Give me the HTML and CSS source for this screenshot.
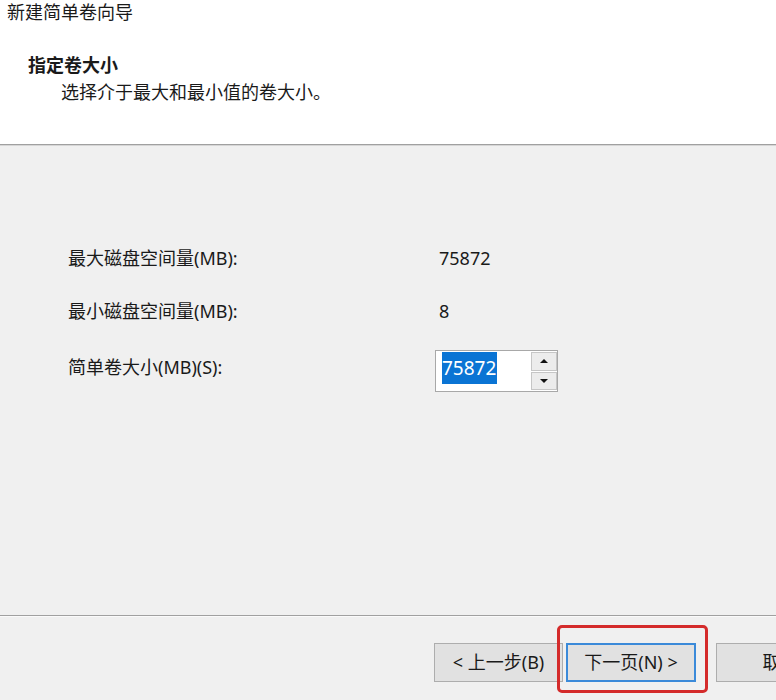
FILE: index.html
```html
<!DOCTYPE html>
<html lang="zh-CN">
<head>
<meta charset="utf-8">
<title>新建简单卷向导</title>
<link rel="stylesheet" href="styles.css">
</head>
<body>
<div class="window">
  <div class="header">
    <div class="title">新建简单卷向导</div>
    <div class="heading">指定卷大小</div>
    <div class="subtitle">选择介于最大和最小值的卷大小。</div>
  </div>
  <div class="content">
    <div class="grid">
      <div class="label">最大磁盘空间量(MB):</div>
      <div class="value">75872</div>
      <div class="label">最小磁盘空间量(MB):</div>
      <div class="value">8</div>
      <div class="label label-spin">简单卷大小(MB)(S):</div>
      <div class="spin">
        <div class="spin-field"><span class="selected">75872</span></div>
        <div class="spin-buttons">
          <div class="spin-btn"><span class="arrow-up"></span></div>
          <div class="spin-btn"><span class="arrow-down"></span></div>
        </div>
      </div>
    </div>
  </div>
  <div class="footer">
    <div class="btn">&lt; 上一步(B)</div>
    <div class="btn btn-default">下一页(N) &gt;</div>
    <div class="btn btn-cancel">取消</div>
  </div>
  <div class="highlight-box"></div>
</div>
</body>
</html>
```
FILE: styles.css
```css
html, body {
  margin: 0;
  padding: 0;
}
body {
  width: 776px;
  height: 700px;
  overflow: hidden;
  font-family: "Noto Sans", "Noto Sans CJK SC", sans-serif;
  color: #1a1a1a;
  background: #f0f0f0;
}
.window {
  position: relative;
  width: 776px;
  height: 700px;
  overflow: hidden;
}
.header {
  background: #ffffff;
  border-bottom: 1px solid #a0a0a0;
  box-sizing: border-box;
  height: 145px;
}
.title {
  font-size: 18px;
  line-height: 24px;
  padding-left: 7px;
}
.heading {
  font-size: 18px;
  font-weight: bold;
  line-height: 26px;
  padding-left: 28px;
  margin-top: 28px;
}
.subtitle {
  font-size: 18px;
  line-height: 26px;
  padding-left: 61px;
  margin-top: 1px;
}
.content {
  border-top: 1px solid #d6d6d6;
  border-bottom: 1px solid #a0a0a0;
  height: 469px;
  background: #f0f0f0;
}
.grid {
  display: grid;
  grid-template-columns: 367px 123px;
  grid-template-rows: 26px 26px 42px;
  row-gap: 27px;
  padding-top: 99px;
  padding-left: 68px;
  font-size: 18px;
  line-height: 26px;
}
.value {
  padding-left: 4px;
}
.label-spin {
  margin-top: 3px;
}
.spin {
  display: flex;
  width: 123px;
  height: 42px;
  box-sizing: border-box;
  border: 1px solid #a8a8a8;
  background: #ffffff;
  margin-top: -1px;
}
.spin-field {
  flex: 1;
  padding-left: 6px;
  padding-top: 1px;
}
.selected {
  display: inline-block;
  background: #0a74d4;
  color: #ffffff;
  line-height: 32px;
  font-size: 19px;
  padding-right: 1px;
}
.spin-buttons {
  width: 26px;
  display: flex;
  flex-direction: column;
  gap: 1px;
  padding: 1px 0 1px 0;
  background: #ffffff;
}
.spin-btn {
  flex: 1;
  background: #ececec;
  border: 1px solid #c6c6c6;
  display: flex;
  align-items: center;
  justify-content: center;
}
.arrow-up {
  width: 0;
  height: 0;
  border-left: 4px solid transparent;
  border-right: 4px solid transparent;
  border-bottom: 4px solid #111;
}
.arrow-down {
  width: 0;
  height: 0;
  border-left: 4px solid transparent;
  border-right: 4px solid transparent;
  border-top: 4px solid #111;
}
.footer {
  border-top: 1px solid #fafafa;
  display: flex;
  padding-top: 26px;
  padding-left: 434px;
}
.btn {
  flex: none;
  width: 129px;
  height: 39px;
  box-sizing: border-box;
  border: 1px solid #adadad;
  background: #e1e1e1;
  font-size: 18px;
  line-height: 37px;
  text-align: center;
  white-space: nowrap;
}
.btn-default {
  width: 130px;
  margin-left: 3px;
  border: 2px solid #3b8ad9;
  line-height: 35px;
}
.btn-cancel {
  margin-left: 20px;
}
.highlight-box {
  position: absolute;
  left: 557px;
  top: 625px;
  width: 151px;
  height: 68px;
  box-sizing: border-box;
  border: 3px solid #d42b2b;
  border-radius: 5px;
}
```
